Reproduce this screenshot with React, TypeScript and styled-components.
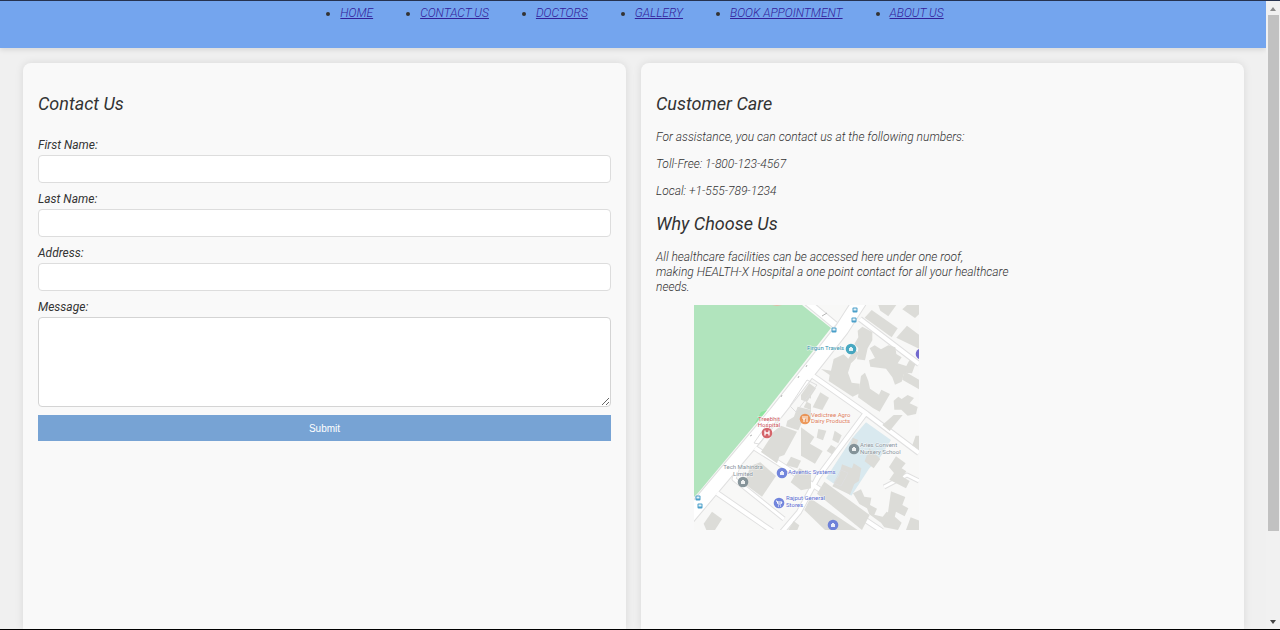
import React from "react";
import styled, { createGlobalStyle } from "styled-components";

const GlobalStyle = createGlobalStyle`
  *, *::before, *::after { box-sizing: border-box; }
  body {
    margin: 0;
    background: #f0f0f0;
    color: #333;
    font-family: Roboto, "Liberation Sans", sans-serif;
    font-size: 12px;
    font-style: italic;
    font-weight: 300;
    line-height: 15px;
  }
`;

const Screen = styled.div`
  display: flex;
  height: 100vh;
  overflow: hidden;
  border-top: 1px solid #26324f;
  border-bottom: 1px solid #000;
`;

const Page = styled.div`
  flex: 1;
  min-width: 0;
  display: flex;
  flex-direction: column;
`;

const Header = styled.header`
  flex: none;
  height: 47px;
  padding-top: 5px;
  background: #74a5ee;
  box-shadow: 0 2px 5px rgba(0, 0, 0, 0.1);
`;

const NavList = styled.ul`
  display: flex;
  justify-content: center;
  gap: 47px;
  margin: 0;
  padding: 0 0 0 18px;
`;

const NavLink = styled.a`
  color: #33209a;
  text-decoration: underline;
`;

const Columns = styled.main`
  flex: 1;
  display: grid;
  grid-template-columns: 1fr 1fr;
  gap: 15px;
  padding: 15px 22px 0 23px;
`;

const Card = styled.section`
  min-width: 0;
  padding: 16px 15px 15px;
  background: #f9f9f9;
  border-radius: 8px 8px 0 0;
  box-shadow: 0 0 8px rgba(0, 0, 0, 0.1);
`;

const Heading = styled.h2`
  margin: 13px 0 15px;
  font-size: 18px;
  font-weight: 400;
  line-height: 23px;
`;

const Text = styled.p`
  max-width: 360px;
  margin: 0;

  & + & {
    margin-top: 12px;
  }
`;

const Form = styled.form`
  display: flex;
  flex-direction: column;
  gap: 8px;
  margin-top: 22px;
`;

const Field = styled.div`
  display: flex;
  flex-direction: column;
  gap: 2px;
`;

const Label = styled.label`
  font-weight: 400;
  line-height: 16px;
`;

const Input = styled.input`
  height: 28px;
  padding: 6px;
  border: 1px solid #ddd;
  border-radius: 4px;
  background: #fff;
`;

const TextArea = styled.textarea`
  height: 90px;
  padding: 6px;
  border: 1px solid #d4d4d4;
  border-radius: 4px;
  background: #fff;
  resize: vertical;
`;

const Submit = styled.button`
  height: 26px;
  border: 0;
  background: #77a3d4;
  color: #fff;
  font-family: "Liberation Sans", Arial, sans-serif;
  font-size: 10px;
`;

const MapFigure = styled.svg`
  display: block;
  width: 225px;
  height: 225px;
  margin: 10px 0 0 38px;
  font-family: Roboto, sans-serif;
  font-size: 6px;
  font-style: normal;
  font-weight: 400;
`;

const ScrollTrack = styled.div`
  flex: none;
  width: 14px;
  display: flex;
  flex-direction: column;
  align-items: center;
  background: #f1f1f1;
`;

const ScrollArrow = styled.svg`
  flex: none;
  width: 14px;
  height: 14px;
`;

const ScrollSpace = styled.div`
  flex: 1;
  width: 100%;
  padding: 0 1px 0 2px;
`;

const ScrollThumb = styled.div`
  height: 86%;
  background: #c1c1c1;
`;

const links = ["HOME", "CONTACT US", "DOCTORS", "GALLERY", "BOOK APPOINTMENT", "ABOUT US"];

const fields = [
  { id: "first-name", label: "First Name:" },
  { id: "last-name", label: "Last Name:" },
  { id: "address", label: "Address:" },
];

const tiles = [
  {
    at: "translate(-3 -5) scale(.3333)",
    shapes: [
      "M360 262L343 285L360 296Z",
      "M347 305L360 312V330L338 322Z",
      "M320 320L360 330V360H305Z",
    ],
  },
  {
    at: "translate(107 -5) scale(.3333)",
    shapes: [
      "M212 30L290 85L272 112L191 53Z",
      "M232 15H286L262 49L238 32Z",
      "M318 77L355 105V147L286 113Z",
      "M318 15H355V42L342 54L304 28Z",
      "M170 92L184 80L214 96V121L200 145L192 181L168 178L172 145L160 132L172 112Z",
      "M60 207L90 212L98 177L128 163L142 176L160 149L174 158L164 176L150 190L141 218L152 248L176 251V280L155 290L83 243L86 225Z",
      "M206 145L221 136L240 148L262 136L283 142L286 162L302 172L290 190L316 198L325 181L343 193L333 220L310 218L302 245L282 254L274 232L255 206L208 200L204 181L222 174Z",
      "M310 214L355 240V268L304 239Z",
      "M180 228L192 218L202 243L207 266L234 284L241 269L267 282L236 335L217 325L171 292Z",
      "M25 250L45 265L18 306L0 299V285Z",
      "M58 277L84 293L64 330L35 322Z",
      "M278 302L292 290L302 297L320 285L339 294L326 310L350 321L345 342L320 347L301 329L280 329Z",
    ],
  },
  {
    at: "translate(-3 110) scale(.3333)",
    shapes: [
      "M270 32L318 50L280 120L265 125L258 145L210 111L238 68L247 50Z",
      "M289 17L312 4L333 22L322 46L285 34Z",
      "M178 153L208 142L255 183L213 245L160 206Z",
      "M300 125L330 137L319 160L285 151Z",
      "M325 160L360 178V220L330 226L299 202Z",
      "M63 290L93 312L72 345H46L38 326Z",
      "M308 318L325 331L319 345H292Z",
    ],
  },
  {
    at: "translate(107 110) scale(.3333)",
    shapes: [
      "M0 37L40 66L27 86L65 108L42 146L0 122Z",
      "M52 42L76 47L66 76L47 68Z",
      "M90 90L105 99L93 118L77 108Z",
      "M101 47L122 61L112 85L94 75Z",
      "M155 68L172 75L160 105L146 98Z",
      "M205 100L238 132L218 160L191 139Z",
      "M123 148L153 160L158 145L181 160L174 198L160 207L147 239L94 214L115 180Z",
      "M285 124L314 145L302 160L316 169L305 185L326 198L315 220L265 194L279 174L264 156Z",
      "M244 30L278 0H305L266 48Z",
      "M344 62H355V105L334 91Z",
      "M70 200L206 300L183 345L158 325L48 236Z",
      "M28 250L170 345H72L10 285Z",
      "M156 235L180 223L190 245L211 248L207 270L228 281L220 299L245 305L257 290L279 303L302 323L291 345L250 337L240 323L205 298L198 280L175 267Z",
      "M270 229L313 246L304 270L322 280L311 304L285 290L279 315L260 299Z",
      "M329 307L355 317V345H315Z",
    ],
  },
];

function Pin({ x, y, color, children }: { x: number; y: number; color: string; children?: React.ReactNode }) {
  return (
    <g transform={`translate(${x} ${y})`}>
      <circle r="5.3" fill={color} opacity=".88" />
      {children || <path d="M-2-1H2V2H-2ZM-1-1V-2H1V-1" fill="#fff" opacity=".85" />}
    </g>
  );
}

function BusStop({ x, y }: { x: number; y: number }) {
  return (
    <g transform={`translate(${x} ${y})`}>
      <rect x="-2.5" y="-2.5" width="5" height="5" rx="1" fill="#4a9fc9" />
      <path d="M-1.5-1.5H1.5V.5H-1.5Z" fill="#e6f3f8" />
    </g>
  );
}

function LocationMap() {
  return (
    <MapFigure viewBox="0 0 225 225" role="img" aria-label="Map of the hospital area">
      <rect width="225" height="225" fill="#f8f8f7" />
      <g transform="translate(107 110) scale(.3333)" fill="#d9e9ef">
        <path d="M195 22L270 75L238 126L205 160L151 242L75 190L152 71Z" />
      </g>
      <g fill="none" strokeLinejoin="round">
        <g stroke="#e0e0e0">
          <path d="M-8 215L82 108L148 24L166 -4" strokeWidth="15" />
          <path d="M112 -4L141 20" strokeWidth="8" />
          <path d="M166 14L225 59M119 71L173 109L225 148M171 109L124 172L105 207L88 227" strokeWidth="6" />
          <path d="M23 188L78 226M61 143L122 182L188 226" strokeWidth="6" />
          <path d="M225 176L213 170L190 182M46 155L40 174L90 214" strokeWidth="5" />
        </g>
        <g stroke="#fff">
          <path d="M-8 215L82 108L148 24L166 -4" strokeWidth="13" />
          <path d="M112 -4L141 20" strokeWidth="6" />
          <path d="M166 14L225 59M119 71L173 109L225 148M171 109L124 172L105 207L88 227" strokeWidth="4" />
          <path d="M23 188L78 226M61 143L122 182L188 226" strokeWidth="4" />
          <path d="M225 176L213 170L190 182M46 155L40 174L90 214" strokeWidth="3" />
        </g>
      </g>
      <path d="M0 0H108L137 23L69 110L4 188L0 192Z" fill="#b1e4bd" />
      <path d="M67 107L73 105L69 110L60 120Z" fill="#8ee5a0" />
      <path d="M78 0L83 1L88 0Z" fill="#e5b7a5" />
      {tiles.map((tile) => (
        <g key={tile.at} transform={tile.at} fill="#dcdcd8">
          {tile.shapes.map((d) => (
            <path key={d} d={d} />
          ))}
        </g>
      ))}
      <g fill="none" stroke="#dedede">
        <path d="M96 101L113 75L123 80L102 107ZM60 138L78 112L83 115L65 139ZM140 178L147 165L154 168L147 181Z" />
        <path d="M87 92L88 90M112 62L113 60M104 73L105 71M128 11L133 8M56 131L58 130" stroke="#b5b5b5" />
      </g>
      <BusStop x={161} y={5} />
      <BusStop x={160} y={15} />
      <BusStop x={140} y={25} />
      <BusStop x={4} y={193} />
      <BusStop x={6} y={201} />
      <g stroke="#fff" strokeWidth="1" paintOrder="stroke" strokeOpacity=".7">
        <text x="113" y="45" fill="#3292ad">Firgun Travels</text>
        <g fill="#cc5960" textAnchor="middle">
          <text x="75" y="116">Treebhit</text>
          <text x="75" y="122">Hospital</text>
        </g>
        <g fill="#dd805e">
          <text x="117" y="112">Vedictree Agro</text>
          <text x="117" y="118">Dairy Products</text>
        </g>
        <g fill="#87929b">
          <text x="166" y="142">Aries Convent</text>
          <text x="166" y="149">Nursery School</text>
        </g>
        <g fill="#87929b" textAnchor="middle">
          <text x="49" y="164">Tech Mahindra</text>
          <text x="49" y="171">Limited</text>
        </g>
        <g fill="#5a6cd0">
          <text x="94" y="169">Adventic Systems</text>
          <text x="92" y="195">Rajput General</text>
          <text x="92" y="202">Stores</text>
        </g>
      </g>
      <Pin x={157} y={44} color="#2f9cb9" />
      <Pin x={73} y={128} color="#cf5057">
        <path d="M-2-2.5V2.5M2-2.5V2.5M-2 0H2" stroke="#fff" strokeWidth="1.3" />
      </Pin>
      <Pin x={111} y={114} color="#eb8b45">
        <path d="M-2-3V0H0V-3M-1 0V3M2-3V3" fill="none" stroke="#fff" />
      </Pin>
      <Pin x={160} y={144} color="#76868d" />
      <Pin x={49} y={177} color="#76868d" />
      <Pin x={88} y={168} color="#5e74d8" />
      <Pin x={85} y={198} color="#5e74d8">
        <path d="M-3-2H-2L-1 1H2L3-1H-2M-1 3H0M1 3H2" fill="none" stroke="#fff" />
      </Pin>
      <Pin x={139} y={220} color="#5e74d8" />
      <Pin x={227} y={49} color="#5e55c8" />
    </MapFigure>
  );
}

export default function App() {
  return (
    <>
      <GlobalStyle />
      <Screen>
        <Page>
          <Header>
            <nav>
              <NavList>
                {links.map((link) => (
                  <li key={link}>
                    <NavLink href="#">{link}</NavLink>
                  </li>
                ))}
              </NavList>
            </nav>
          </Header>
          <Columns>
            <Card>
              <Heading>Contact Us</Heading>
              <Form onSubmit={(event) => event.preventDefault()}>
                {fields.map((field) => (
                  <Field key={field.id}>
                    <Label htmlFor={field.id}>{field.label}</Label>
                    <Input id={field.id} type="text" />
                  </Field>
                ))}
                <Field>
                  <Label htmlFor="message">Message:</Label>
                  <TextArea id="message" />
                </Field>
                <Submit type="submit">Submit</Submit>
              </Form>
            </Card>
            <Card>
              <Heading>Customer Care</Heading>
              <Text>For assistance, you can contact us at the following numbers:</Text>
              <Text>Toll-Free: 1-800-123-4567</Text>
              <Text>Local: +1-555-789-1234</Text>
              <Heading>Why Choose Us</Heading>
              <Text>
                All healthcare facilities can be accessed here under one roof,
                <br />
                making HEALTH-X Hospital a one point contact for all your healthcare needs.
              </Text>
              <LocationMap />
            </Card>
          </Columns>
        </Page>
        <ScrollTrack aria-hidden="true">
          <ScrollArrow viewBox="0 0 14 14">
            <path d="M4 10L7 6L10 10Z" fill="#8a8a8a" />
          </ScrollArrow>
          <ScrollSpace>
            <ScrollThumb />
          </ScrollSpace>
          <ScrollArrow viewBox="0 0 14 14">
            <path d="M4 5L7 9L10 5Z" fill="#444" />
          </ScrollArrow>
        </ScrollTrack>
      </Screen>
    </>
  );
}
